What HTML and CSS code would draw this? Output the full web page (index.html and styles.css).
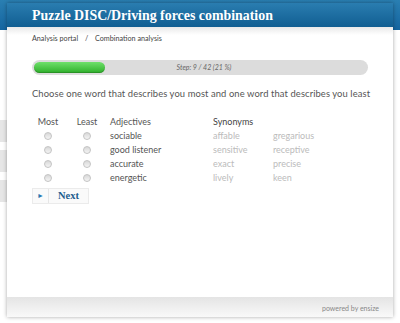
FILE: index.html
```html
<!DOCTYPE html>
<html lang="en">
<head>
  <meta charset="UTF-8">
  <title>Puzzle DISC/Driving forces combination</title>
  <link rel="stylesheet" href="styles.css">
</head>
<body>
  <div class="page">
    <div class="page-top"></div>
    <div class="page-rows">
      <div class="page-row"></div>
      <div class="page-row"></div>
      <div class="page-row"></div>
    </div>
  </div>

  <div class="modal">
    <div class="modal-head">Puzzle DISC/Driving forces combination</div>
    <div class="modal-body">
      <div class="crumbs">Analysis portal <span class="sep">/</span> Combination analysis</div>

      <div class="progress">
        <div class="progress-fill" style="width: 21%"></div>
        <div class="progress-text">Step: 9 / 42 (21 %)</div>
      </div>

      <p class="question">Choose one word that describes you most and one word that describes you least</p>

      <div class="words">
        <div class="c">Most</div><div class="c">Least</div><div>Adjectives</div><div class="syn-head">Synonyms</div><div></div>

        <div class="c"><span class="radio"></span></div><div class="c"><span class="radio"></span></div><div>sociable</div><div class="syn">affable</div><div class="syn">gregarious</div>

        <div class="c"><span class="radio"></span></div><div class="c"><span class="radio"></span></div><div>good listener</div><div class="syn">sensitive</div><div class="syn">receptive</div>

        <div class="c"><span class="radio"></span></div><div class="c"><span class="radio"></span></div><div>accurate</div><div class="syn">exact</div><div class="syn">precise</div>

        <div class="c"><span class="radio"></span></div><div class="c"><span class="radio"></span></div><div>energetic</div><div class="syn">lively</div><div class="syn">keen</div>
      </div>

      <button class="next"><span class="next-icon">&#9658;</span><span class="next-label">Next</span></button>
    </div>
    <div class="modal-foot">powered by ensize</div>
  </div>
</body>
</html>
```

FILE: styles.css
```css
body {
  margin: 0;
  font-family: Lato, "Open Sans", sans-serif;
  background: #fff;
  width: 400px;
  height: 323px;
  overflow: hidden;
}
.page-top {
  height: 30px;
  background: linear-gradient(#2a7fb2, #1565a0);
}
.page-rows {
  padding-top: 90px;
}
.page-row {
  height: 22px;
  background: #e6e6e6;
  margin-bottom: 8px;
  width: 12px;
}
.modal {
  position: absolute;
  left: 7px;
  top: 3px;
  width: 386px;
  height: 314px;
  background: #fff;
  display: flex;
  flex-direction: column;
  box-shadow: 0 0 4px rgba(0,0,0,0.35);
}
.modal-head {
  height: 24px;
  line-height: 25px;
  padding-left: 25px;
  color: #fff;
  font-family: "Liberation Serif", serif;
  font-weight: bold;
  font-size: 13.9px;
  background: linear-gradient(#2a7db0, #115e92);
}
.modal-body {
  flex: 1;
  padding: 6px 25px 0 25px;
  background: linear-gradient(#e9e9e9, #fff 8px);
}
.crumbs {
  font-size: 7.2px;
  line-height: 12px;
  color: #444;
}
.sep {
  margin: 0 5px;
}
.progress {
  position: relative;
  margin-top: 15px;
  height: 15px;
  border-radius: 8px;
  background: #dcdcdc;
  width: 336px;
}
.progress-fill {
  position: absolute;
  left: 2px;
  top: 2px;
  height: 11px;
  border-radius: 6px;
  background: linear-gradient(#6fe06b, #2eb02a);
  box-shadow: inset 0 -1px 1px rgba(0,0,0,0.2);
}
.progress-text {
  text-align: center;
  line-height: 15px;
  font-size: 7px;
  font-style: italic;
  color: #666;
  padding-left: 8px;
}
.question {
  margin: 12px 0 0 0;
  font-size: 9.4px;
  letter-spacing: 0.1px;
  line-height: 14px;
  white-space: nowrap;
  color: #555;
}
.words {
  margin-top: 13px;
  display: grid;
  grid-template-columns: 32px 46px 103px 60px auto;
  grid-auto-rows: 14px;
  align-items: center;
  font-size: 9px;
  color: #555;
}
.c {
  text-align: center;
}
.syn {
  color: #bbb;
}
.syn-head {
  color: #444;
}
.radio {
  display: inline-block;
  width: 6px;
  height: 6px;
  border-radius: 50%;
  border: 1px solid #c4c4c4;
  background: linear-gradient(#d8d8d8, #f4f4f4);
  vertical-align: middle;
}
.next {
  display: flex;
  margin-top: 4px;
  padding: 0;
  height: 16px;
  width: 57px;
  border: 1px solid #ebebeb;
  background: #fafafa;
  cursor: pointer;
}
.next-icon {
  width: 15px;
  border-right: 1px solid #e6e6e6;
  color: #2a78b0;
  font-size: 7px;
  line-height: 14px;
  text-align: center;
}
.next-label {
  flex: 1;
  color: #1f5f8f;
  font-family: "Liberation Serif", serif;
  font-weight: bold;
  font-size: 10.5px;
  line-height: 14px;
  text-align: center;
}
.modal-foot {
  height: 20px;
  line-height: 22px;
  padding-right: 14px;
  text-align: right;
  font-size: 7px;
  color: #888;
  background: linear-gradient(#e4e4e4, #f9f9f9);
}
```
